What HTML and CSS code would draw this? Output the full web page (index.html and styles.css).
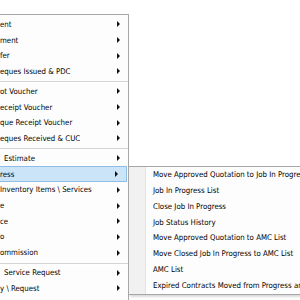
FILE: index.html
```html
<!DOCTYPE html>
<html lang="en">
<head>
  <meta charset="UTF-8">
  <title>Menu</title>
  <link rel="stylesheet" href="styles.css">
</head>
<body>
  <div class="screen">
    <div class="menu main-menu">
      <div class="item"><span class="label">ent</span><span class="arrow"></span></div>
      <div class="item"><span class="label">ment</span><span class="arrow"></span></div>
      <div class="item"><span class="label">fer</span><span class="arrow"></span></div>
      <div class="item"><span class="label">eques Issued &amp; PDC</span><span class="arrow"></span></div>
      <div class="sep"></div>
      <div class="item"><span class="label">ot Voucher</span><span class="arrow"></span></div>
      <div class="item"><span class="label">eceipt Voucher</span><span class="arrow"></span></div>
      <div class="item"><span class="label">que Receipt Voucher</span><span class="arrow"></span></div>
      <div class="item"><span class="label">eques Received &amp; CUC</span><span class="arrow"></span></div>
      <div class="sep"></div>
      <div class="item"><span class="label indent">Estimate</span><span class="arrow"></span></div>
      <div class="item active"><span class="label">ress</span><span class="arrow"></span></div>
      <div class="item"><span class="label">Inventory Items \ Services</span><span class="arrow"></span></div>
      <div class="item"><span class="label">e</span><span class="arrow"></span></div>
      <div class="item"><span class="label">ce</span><span class="arrow"></span></div>
      <div class="item"><span class="label">o</span><span class="arrow"></span></div>
      <div class="item"><span class="label">ommission</span><span class="arrow"></span></div>
      <div class="sep"></div>
      <div class="item"><span class="label indent">Service Request</span><span class="arrow"></span></div>
      <div class="item"><span class="label">y \ Request</span><span class="arrow"></span></div>
    </div>

    <div class="menu sub-menu">
      <div class="item">Move Approved Quotation to Job In Progress</div>
      <div class="item">Job In Progress List</div>
      <div class="item">Close Job In Progress</div>
      <div class="item">Job Status History</div>
      <div class="item">Move Approved Quotation to AMC List</div>
      <div class="item">Move Closed Job In Progress to AMC List</div>
      <div class="item">AMC List</div>
      <div class="item">Expired Contracts Moved from Progress and AMC</div>
    </div>
  </div>
</body>
</html>
```

FILE: styles.css
```css
body {
  margin: 0;
  background: #fff;
  font-family: "DejaVu Sans Condensed", "DejaVu Sans", sans-serif;
  font-stretch: condensed;
  font-size: 7.8px;
  color: #000;
  overflow: hidden;
}

.screen {
  position: relative;
  width: 300px;
  height: 300px;
  overflow: hidden;
}

.menu {
  background: #fdfdfd;
}

.main-menu {
  margin-top: 14px;
  width: 128px;
  height: 290px;
  padding-top: 1.5px;
  border-top: 1px solid #a7a7a7;
  border-right: 1px solid #a7a7a7;
}

.main-menu .item {
  display: flex;
  align-items: center;
  height: 15.7px;
  box-sizing: border-box;
}

.main-menu .label {
  flex: 1;
  white-space: nowrap;
}

.main-menu .indent {
  padding-left: 4px;
}

.main-menu .active {
  background: #cce4f7;
  border: 1px solid #8fbde6;
  border-left: none;
  margin-right: 1px;
}

.arrow {
  width: 0;
  height: 0;
  margin-right: 8px;
  border-left: 3px solid #111;
  border-top: 3px solid transparent;
  border-bottom: 3px solid transparent;
}

.sep {
  height: 4.3px;
  padding-top: 2.2px;
  box-sizing: border-box;
}

.sep::before {
  content: "";
  display: block;
  height: 1px;
  background: #d5d5d5;
  border-bottom: 1px solid #fff;
}

.sub-menu {
  position: absolute;
  left: 128px;
  top: 165.5px;
  width: 200px;
  padding: 0.7px 0;
  border: 1px solid #a7a7a7;
  border-right: none;
  background: linear-gradient(to right, #f1f1f1 0, #f1f1f1 16px, #e3e3e3 16px, #e3e3e3 17px, #fdfdfd 17px);
  box-shadow: 2px 2px 2px rgba(0, 0, 0, 0.15);
}

.sub-menu .item {
  height: 15.8px;
  line-height: 15.8px;
  padding-left: 24px;
  white-space: nowrap;
}
```
